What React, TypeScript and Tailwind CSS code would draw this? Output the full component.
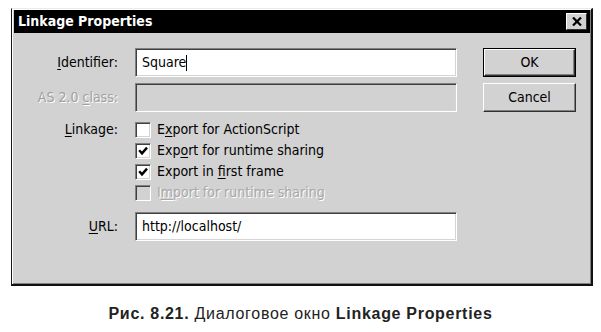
import React from 'react';

const font = "font-['DejaVu_Sans_Condensed','DejaVu_Sans',sans-serif]";

const sunken =
  'border-t-[#808080] border-l-[#808080] border-b-white border-r-white border shadow-[inset_1px_1px_0_#404040,inset_-1px_-1px_0_#d4d4d4]';

const Mn: React.FC<{ children: React.ReactNode }> = ({ children }) => <span className="underline underline-offset-2">{children}</span>;

const Field: React.FC<{ disabled?: boolean; children?: React.ReactNode }> = ({ disabled, children }) => (
  <div className={`${sunken} h-[29px] w-[322px] flex items-center px-[6px] ${disabled ? 'bg-[#d2d2d2]' : 'bg-white'}`}>{children}</div>
);

const Check: React.FC<{ checked?: boolean; disabled?: boolean; children: React.ReactNode }> = ({ checked, disabled, children }) => (
  <div className="h-[21px] flex items-center gap-[6px]">
    <div className={`${sunken} w-[16px] h-[16px] flex items-center justify-center ${disabled ? 'bg-[#d2d2d2]' : 'bg-white'}`}>
      {checked && (
        <svg width="10" height="10" viewBox="0 0 10 10">
          <path d="M1.2 4.3 L4 7.4 L9 1.6" fill="none" stroke="#000" strokeWidth="2.4" />
        </svg>
      )}
    </div>
    <span className={disabled ? 'text-[#a8a8a8] [text-shadow:1px_1px_0_#fff]' : 'text-black'}>{children}</span>
  </div>
);

const Button: React.FC<{ isDefault?: boolean; children: React.ReactNode }> = ({ isDefault, children }) => (
  <div className={`w-[93px] h-[29px] ${isDefault ? 'border border-black' : ''}`}>
    <div className="h-full w-full flex items-center justify-center bg-[#d2d2d2] border border-t-white border-l-white border-r-[#303030] border-b-[#303030] shadow-[inset_-1px_-1px_0_#808080]">
      {children}
    </div>
  </div>
);

export default function App() {
  return (
    <div className={`w-[601px] h-[332px] bg-white overflow-hidden pt-[8px] ${font} text-[14px] text-black`}>
      <div className="ml-[11px] w-[582px] h-[278px] bg-[#d2d2d2] border-t border-l border-r-2 border-b-2 border-t-[#eaeaea] border-l-[#1a1a1a] border-r-[#111] border-b-[#111] shadow-[inset_1px_1px_0_#fff,inset_-1px_-1px_0_#808080] flex flex-col">
        <div className="mt-px ml-[2px] mr-px h-[23px] bg-black flex items-center justify-between pl-[4px] pr-[3px]">
          <span className="text-white font-bold text-[14px]">Linkage Properties</span>
          <div className="w-[21px] h-[17px] bg-[#d2d2d2] border border-t-white border-l-white border-r-[#303030] border-b-[#303030] flex items-center justify-center">
            <svg width="10" height="9" viewBox="0 0 10 9">
              <path d="M1 0.5 L9 8.5 M9 0.5 L1 8.5" stroke="#000" strokeWidth="2.2" />
            </svg>
          </div>
        </div>

        <div className="flex pt-[15px]">
          <div className="flex flex-col">
            <div className="flex items-center">
              <div className="w-[106px] text-right"><Mn>I</Mn>dentifier:</div>
              <div className="ml-[17px]">
                <Field>
                  <span>Square</span>
                  <span className="w-px h-[16px] bg-black" />
                </Field>
              </div>
            </div>
            <div className="flex items-center mt-[6px]">
              <div className="w-[106px] text-right text-[#a0a0a0] [text-shadow:1px_1px_0_#fff]">AS 2.0 <Mn>c</Mn>lass:</div>
              <div className="ml-[17px]">
                <Field disabled />
              </div>
            </div>
            <div className="flex mt-[7px]">
              <div className="w-[106px] text-right h-[21px] leading-[21px]"><Mn>L</Mn>inkage:</div>
              <div className="ml-[17px] flex flex-col">
                <Check>E<Mn>x</Mn>port for ActionScript</Check>
                <Check checked>Exp<Mn>o</Mn>rt for runtime sharing</Check>
                <Check checked>Export in <Mn>f</Mn>irst frame</Check>
                <Check disabled>I<Mn>m</Mn>port for runtime sharing</Check>
              </div>
            </div>
            <div className="flex items-center mt-[9px]">
              <div className="w-[106px] text-right"><Mn>U</Mn>RL:</div>
              <div className="ml-[17px]">
                <Field>
                  <span>http://localhost/</span>
                </Field>
              </div>
            </div>
          </div>
          <div className="ml-[26px] flex flex-col gap-[6px]">
            <Button isDefault>OK</Button>
            <Button>Cancel</Button>
          </div>
        </div>
      </div>

      <div className="mt-[16px] text-center font-['Liberation_Sans',Arial,sans-serif] text-[16px] tracking-[0.7px] text-[#222]">
        <span className="font-bold">Рис. 8.21.</span> Диалоговое окно <span className="font-bold">Linkage Properties</span>
      </div>
    </div>
  );
}
